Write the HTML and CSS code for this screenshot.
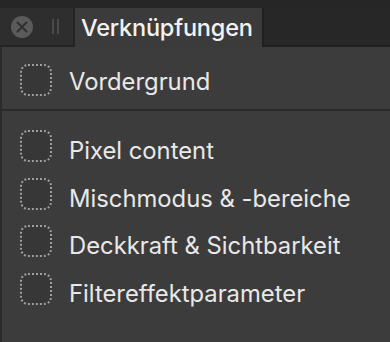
FILE: index.html
```html
<!DOCTYPE html>
<html lang="de">
<head>
    <meta charset="UTF-8">
    <title>Verknüpfungen</title>
    <link rel="stylesheet" href="styles.css">
</head>
<body>
    <div class="panel">
        <div class="topstrip"></div>
        <div class="tabbar">
            <div class="controls">
                <svg class="close" width="24" height="24" viewBox="0 0 24 24">
                    <circle cx="12" cy="12" r="11" fill="#5b5b5b"/>
                    <path d="M7.5 7.5 L16.5 16.5 M16.5 7.5 L7.5 16.5" stroke="#303030" stroke-width="2" stroke-linecap="round"/>
                </svg>
                <div class="grip"><span></span><span></span></div>
            </div>
            <div class="tab">Verknüpfungen</div>
            <div class="tab-rest"></div>
        </div>

        <div class="body">
            <div class="section first">
                <div class="item">
                    <span class="check"></span>
                    <span class="label">Vordergrund</span>
                </div>
            </div>
            <div class="divider"></div>
            <div class="section list">
                <div class="item"><span class="check"></span><span class="label">Pixel content</span></div>
                <div class="item"><span class="check"></span><span class="label">Mischmodus &amp; -bereiche</span></div>
                <div class="item"><span class="check"></span><span class="label">Deckkraft &amp; Sichtbarkeit</span></div>
                <div class="item"><span class="check"></span><span class="label">Filtereffektparameter</span></div>
            </div>
        </div>
    </div>
</body>
</html>
```

FILE: styles.css
```css
body {
    margin: 0;
    background: #3c3c3c;
    font-family: Inter, "Liberation Sans", Arial, sans-serif;
    color: #e8e8e8;
    overflow: hidden;
}

.panel {
    width: 390px;
    height: 342px;
    display: flex;
    flex-direction: column;
}

.topstrip {
    height: 8px;
    background: #262626;
}

.tabbar {
    display: flex;
    height: 39px;
}

.controls {
    width: 75px;
    background: #2e2e2e;
    border-right: 2px solid #242424;
    border-bottom: 2px solid #242424;
    box-sizing: border-box;
    display: flex;
    align-items: center;
    padding-left: 10px;
    gap: 18px;
}

.close {
    display: block;
}

.grip {
    display: flex;
    gap: 3px;
}

.grip span {
    width: 2px;
    height: 15px;
    background: #4a4a4a;
}

.tab {
    width: 187px;
    background: #3b3b3b;
    color: #f2f2f2;
    font-size: 23.5px;
    font-weight: 500;
    padding-left: 6px;
    box-sizing: border-box;
    line-height: 39px;
    letter-spacing: -0.2px;
    white-space: nowrap;
}

.tab-rest {
    flex: 1;
    background: #272727;
    border-left: 2px solid #1f1f1f;
    border-bottom: 2px solid #1f1f1f;
}

.body {
    flex: 1;
    background: #3c3c3c;
    border-left: 2px solid #2b2b2b;
}

.section.first {
    height: 62px;
    padding-top: 17px;
    box-sizing: border-box;
}

.divider {
    height: 2px;
    background: #2a2a2a;
}

.section.list {
    padding-top: 19px;
    display: flex;
    flex-direction: column;
    gap: 15.5px;
}

.item {
    display: flex;
    align-items: flex-start;
    height: 32px;
}

.check {
    flex: none;
    width: 32px;
    height: 32px;
    margin-left: 18px;
    box-sizing: border-box;
    border: 2px dotted #a0a0a0;
    border-radius: 8px;
    background: #373737;
}

.label {
    margin-left: 17px;
    font-size: 23.8px;
    line-height: 32px;
    margin-top: 5px;
    white-space: nowrap;
}

.first .label {
    margin-top: 2px;
}
```
